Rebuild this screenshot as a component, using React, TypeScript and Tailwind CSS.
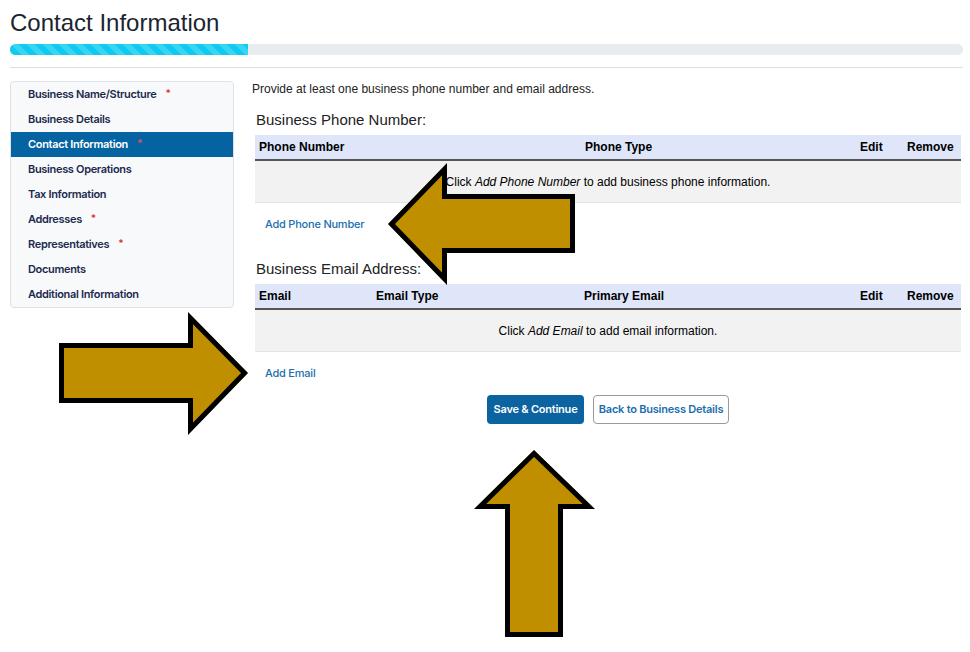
import React from "react";

const navItems: { label: string; req?: boolean; active?: boolean }[] = [
  { label: "Business Name/Structure", req: true },
  { label: "Business Details" },
  { label: "Contact Information", req: true, active: true },
  { label: "Business Operations" },
  { label: "Tax Information" },
  { label: "Addresses", req: true },
  { label: "Representatives", req: true },
  { label: "Documents" },
  { label: "Additional Information" },
];

function Arrows() {
  const up = "534,450 595,509 563,509 563,637 505,637 505,509 474,509";
  const left = "388,224 447,163 447,194 575,194 575,253 447,253 447,285";
  const right = "59,343 188,343 188,312 248,373 188,435 188,403 59,403";
  return (
    <svg className="pointer-events-none absolute left-0 top-0" width="970" height="652" viewBox="0 0 970 652">
      <defs>
        <clipPath id="cu"><polygon points={up} /></clipPath>
        <clipPath id="cl"><polygon points={left} /></clipPath>
        <clipPath id="cr"><polygon points={right} /></clipPath>
      </defs>
      <polygon points={up} fill="#bf8f00" stroke="#000" strokeWidth="10" clipPath="url(#cu)" />
      <polygon points={left} fill="#bf8f00" stroke="#000" strokeWidth="10" clipPath="url(#cl)" />
      <polygon points={right} fill="#bf8f00" stroke="#000" strokeWidth="10" clipPath="url(#cr)" />
    </svg>
  );
}

function DataTable({ cols, widths, message }: { cols: string[]; widths: string; message: React.ReactNode }) {
  return (
    <div className="w-[706px] font-['Liberation_Sans',Arial,sans-serif] text-[12px] text-black">
      <div className={`grid ${widths} h-[26px] items-center bg-[#dfe6fa] border-b-2 border-[#555]`}>
        {cols.map((c) => (
          <div key={c} className="px-[4px] font-bold">{c}</div>
        ))}
      </div>
      <div className="flex h-[42px] items-center justify-center bg-[#f2f2f2] border-b border-[#e4e4e4]">
        <span>{message}</span>
      </div>
    </div>
  );
}

export default function App() {
  return (
    <div className="relative w-[970px] h-[652px] overflow-hidden bg-white">
      <div className="px-[10px] pr-[7px]">
        <h1 className="mt-[9px] text-[24px] leading-[28px] font-normal text-[#1c2331] font-['Liberation_Sans',Arial,sans-serif]">
          Contact Information
        </h1>
        <div className="mt-[7px] h-[11px] w-full rounded-[6px] bg-[#e9ecef] overflow-hidden">
          <div className="h-full w-[238px] bg-[#0dcaf0] bg-[linear-gradient(45deg,rgba(255,255,255,.18)_25%,transparent_25%,transparent_50%,rgba(255,255,255,.18)_50%,rgba(255,255,255,.18)_75%,transparent_75%,transparent)] bg-[length:16px_16px]" />
        </div>
        <div className="mt-[12px] h-px w-full bg-[#dcdfe2]" />
        <div className="mt-[13px] flex gap-[18px]">
          <nav className="w-[224px] self-start rounded-[4px] border border-[#dee2e6] bg-[#f8f9fa] font-['Inter',sans-serif] text-[11px] font-semibold tracking-[-0.03em]">
            {navItems.map((it) => (
              <div
                key={it.label}
                className={`flex h-[25px] items-center pl-[17px] ${it.active ? "bg-[#0563a1] text-white" : "text-[#1b2a4e]"}`}
              >
                <span>{it.label}</span>
                {it.req && <span className={`ml-[9px] -mt-[2px] text-[10px] ${it.active ? "text-[#e0505a]" : "text-[#d9363e]"}`}>*</span>}
              </div>
            ))}
          </nav>
          <main className="flex-1 font-['Liberation_Sans',Arial,sans-serif]">
            <p className="text-[12px] leading-[16px] text-[#222]">Provide at least one business phone number and email address.</p>
            <div className="pl-[3px]">
              <h2 className="mt-[14px] text-[15px] leading-[18px] text-[#222] pl-px">Business Phone Number:</h2>
              <div className="mt-[6px]">
                <DataTable
                  cols={["Phone Number", "Phone Type", "Edit", "Remove"]}
                  widths="grid-cols-[326px_275px_47px_58px]"
                  message={<>Click <i>Add Phone Number</i> to add business phone information.</>}
                />
              </div>
              <a className="mt-[14px] ml-[10px] block leading-[14px] font-['Inter',sans-serif] text-[11px] font-medium tracking-[-0.02em] text-[#1b6fae]">
                Add Phone Number
              </a>
              <h2 className="mt-[29px] text-[15px] leading-[18px] text-[#222] pl-px">Business Email Address:</h2>
              <div className="mt-[6px]">
                <DataTable
                  cols={["Email", "Email Type", "Primary Email", "Edit", "Remove"]}
                  widths="grid-cols-[117px_208px_276px_47px_58px]"
                  message={<>Click <i>Add Email</i> to add email information.</>}
                />
              </div>
              <a className="mt-[14px] ml-[10px] block leading-[14px] font-['Inter',sans-serif] text-[11px] font-medium tracking-[-0.02em] text-[#1b6fae]">
                Add Email
              </a>
              <div className="mt-[15px] flex w-[706px] justify-center gap-[9px] font-['Inter',sans-serif] text-[11px] font-semibold tracking-[-0.02em]">
                <button className="h-[29px] w-[97px] rounded-[4px] bg-[#0b63a0] text-white">Save &amp; Continue</button>
                <button className="h-[29px] w-[136px] rounded-[4px] border border-[#9a9a9a] bg-white text-[#1b6fae]">Back to Business Details</button>
              </div>
            </div>
          </main>
        </div>
      </div>
      <Arrows />
    </div>
  );
}
